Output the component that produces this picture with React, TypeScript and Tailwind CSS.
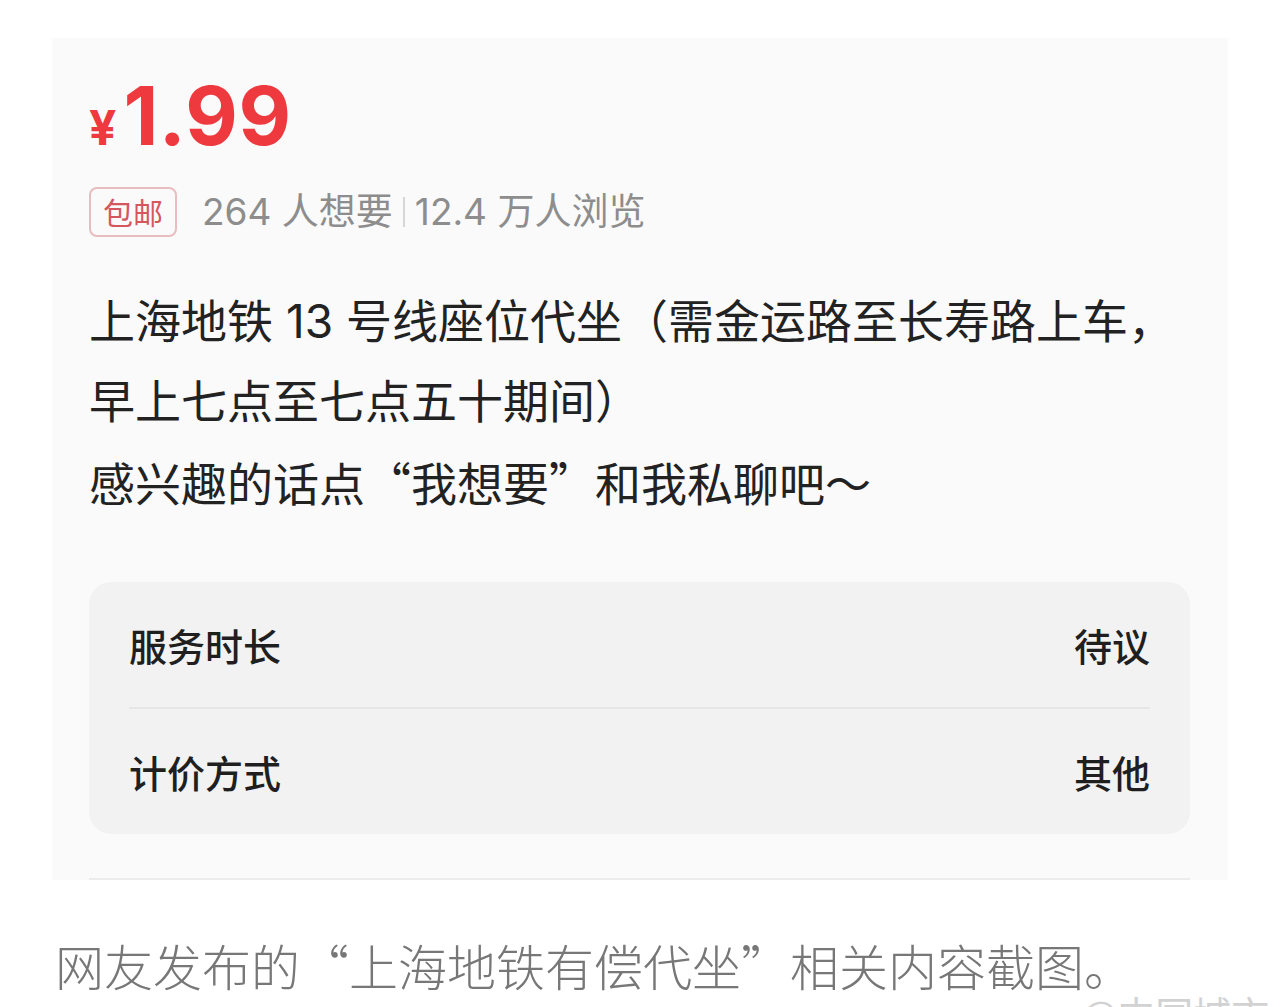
const SANS = "font-['Inter','Noto_Sans_CJK_SC',sans-serif]";
const CJK = "font-['Noto_Sans_CJK_SC',sans-serif]";

function InfoRow({ label, value }: { label: string; value: string }) {
  return (
    <div className="flex h-[125px] items-center justify-between">
      <span className="text-[38px] font-medium text-[#1f1f1f]">{label}</span>
      <span className="text-[38px] font-medium text-[#1f1f1f]">{value}</span>
    </div>
  );
}

export default function App() {
  return (
    <div className="relative h-[1007px] w-[1280px] overflow-hidden bg-white font-['Noto_Sans_CJK_SC',sans-serif]">
      {/* listing screenshot */}
      <div className="ml-[52px] mt-[38px] w-[1176px] bg-[#fafafa] pl-[37px] pr-[38px] pt-[38px]">
        <div className={`flex items-baseline text-[#ee3a3f] ${SANS}`}>
          <span className="mr-[7px] text-[48px] font-bold leading-none">¥</span>
          <span className="text-[81px] font-bold leading-none tracking-[0.5px]">1.99</span>
        </div>

        <div className="mt-[27px] flex items-center">
          <span className="flex h-[50px] items-center rounded-[8px] border-2 border-[#e9bcbf] px-[12px] text-[30px] text-[#d4575d]">
            包邮
          </span>
          <span className={`ml-[25px] text-[37px] text-[#8d8d8d] ${SANS}`}>264 人想要</span>
          <span className="mx-[10px] h-[30px] w-[2px] bg-[#d6d6d6]" />
          <span className={`text-[37px] text-[#8d8d8d] ${SANS}`}>12.4 万人浏览</span>
        </div>

        <div className={`mt-[41px] text-[46px] leading-[80px] text-[#222] ${SANS}`}>
          <p>上海地铁 13 号线座位代坐（需金运路至长寿路上车，</p>
          <p>早上七点至七点五十期间）</p>
          <p>
            感兴趣的话点<span className={CJK}>“</span>我想要<span className={CJK}>”</span>和我私聊吧～
          </p>
        </div>

        <div className="mt-[58px] rounded-[22px] bg-[#f2f2f2] px-[40px]">
          <InfoRow label="服务时长" value="待议" />
          <div className="h-[2px] bg-[#e6e6e6]" />
          <InfoRow label="计价方式" value="其他" />
        </div>

        <div className="mt-[44px] h-[2px] bg-[#ececec]" />
      </div>

      {/* caption */}
      <p className="ml-[55px] mt-[60px] text-[49px] font-light leading-none text-[#777]">
        网友发布的“上海地铁有偿代坐”相关内容截图。
      </p>

      {/* watermark */}
      <div className="absolute left-[1040px] top-[994px] flex items-center gap-[6px] text-[38px] leading-none text-[#d2d2d2]">
        <svg width="40" height="34" viewBox="0 0 44 36" fill="none" stroke="#cfcfcf" strokeWidth="3">
          <path d="M24 8c6-1 11 4 10 10" />
          <path d="M26 2c10-1 17 7 15 17" />
          <ellipse cx="16" cy="26" rx="14" ry="9" />
        </svg>
        <span>@中国城市报</span>
      </div>
    </div>
  );
}
